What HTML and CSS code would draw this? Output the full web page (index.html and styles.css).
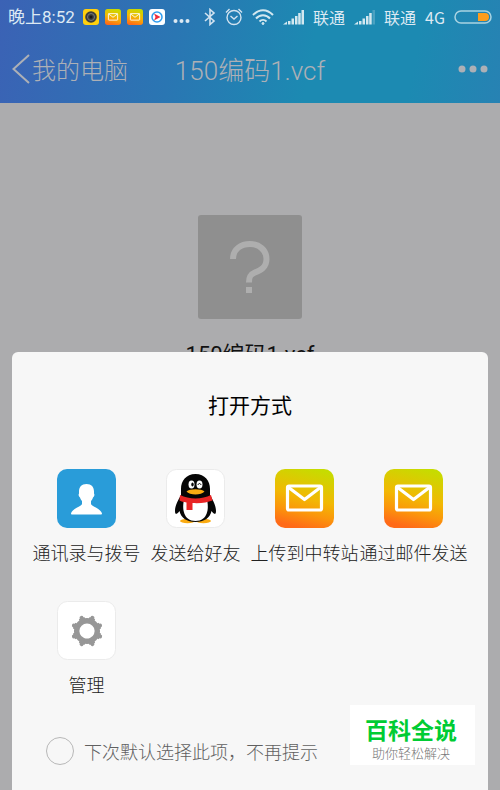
FILE: index.html
```html
<!DOCTYPE html>
<html lang="zh-CN">
<head>
    <meta charset="UTF-8">
    <meta name="viewport" content="width=device-width, initial-scale=1.0">
    <title>150编码1.vcf</title>
    <link rel="stylesheet" href="styles.css">
</head>
<body>
    <!-- shared icon shapes -->
    <svg class="defs" width="0" height="0">
        <defs>
            <linearGradient id="mailBg" x1="0.7" y1="0" x2="0.45" y2="1">
                <stop offset="0" stop-color="#c6dc00"/>
                <stop offset="0.5" stop-color="#f2b804"/>
                <stop offset="0.75" stop-color="#fb960b"/>
                <stop offset="1" stop-color="#ff6a18"/>
            </linearGradient>
            <symbol id="mail" viewBox="0 0 59 59">
                <rect width="59" height="59" rx="10" fill="url(#mailBg)"/>
                <rect x="12.5" y="17" width="34" height="24" rx="1.5" fill="none" stroke="#fff" stroke-width="3.2"/>
                <path d="M13 18l16.500 12.500L46 18" fill="none" stroke="#fff" stroke-width="3.2" stroke-linejoin="round"/>
            </symbol>
        </defs>
    </svg>

    <div class="top">
        <div class="status">
            <span class="time">晚上8:52</span>
            <div class="notices">
                <svg width="16" height="16" viewBox="0 0 16 16">
                    <rect width="16" height="16" rx="3" fill="#ffd00d"/>
                    <circle cx="8" cy="8" r="5.800" fill="#3b3d3c"/>
                    <circle cx="8" cy="8" r="3.500" fill="none" stroke="#777"/>
                    <circle cx="8" cy="8" r="1.500" fill="#181818"/>
                </svg>
                <svg width="16" height="16"><use href="#mail"/></svg>
                <svg width="16" height="16"><use href="#mail"/></svg>
                <svg width="16" height="16" viewBox="0 0 16 16">
                    <rect width="16" height="16" rx="3" fill="#fff"/>
                    <circle cx="8" cy="8" r="5" fill="none" stroke="#2f9df0" stroke-width="1.500"/>
                    <path d="M5 4.500l6.500 3.500L5 11.500 6.500 8z" fill="#f02c3c"/>
                </svg>
            </div>
            <svg width="17" height="16" viewBox="0 0 17 16" fill="#dde9f3">
                <circle cx="2.500" cy="12" r="2"/><circle cx="8.500" cy="12" r="2"/><circle cx="14.500" cy="12" r="2"/>
            </svg>
            <div class="signals">
                <svg width="12" height="18" viewBox="0 0 12 18" fill="none" stroke="#d3e3f0" stroke-width="1.600">
                    <path d="M1 5l9 8-4 3.500V1.500L10 5l-9 8"/>
                </svg>
                <svg width="18" height="18" viewBox="0 0 18 18" fill="none" stroke="#d3e3f0" stroke-width="1.400">
                    <circle cx="9" cy="9.500" r="7"/>
                    <path d="M5.500 8L9 11l3.500-3M1 4.500L4.500 1M17 4.500L13.500 1"/>
                </svg>
                <svg width="22" height="18" viewBox="0 0 22 18" fill="none" stroke="#d3e8f0" stroke-width="2">
                    <path d="M1 7c6-6.500 14-6.500 20 0M4 10.500c4-4.500 10-4.500 14 0M7.500 13.500c2-2 5-2 7 0"/>
                    <circle cx="11" cy="15.500" r="1" fill="#d3e8f0" stroke-width="1"/>
                </svg>
                <svg width="21" height="16" viewBox="0 0 21 16" fill="#d3e8f0">
                    <path d="M0 15.500l4-3v3zM5 12h2.500v3.500H5zM8.500 9.500H11v6H8.500zM12 7h2.500v8.500H12zM15.200 4h2.500v11.500h-2.500zM18.500 1H21v14.500h-2.500z"/>
                </svg>
                <span>联通</span>
                <svg width="21" height="16" viewBox="0 0 21 16" fill="#d3e8f0">
                    <path d="M0 15.500l4-3v3zM5 12h2.500v3.500H5zM8.500 9.500H11v6H8.500zM12 7h2.500v8.500H12zM15.200 4h2.500v11.500h-2.500z"/>
                    <path d="M18.500 1H21v14.500h-2.500z" opacity="0.25"/>
                </svg>
                <span>联通</span>
                <span>4G</span>
                <svg width="38" height="14" viewBox="0 0 38 14">
                    <rect x="1" y="1" width="36" height="12" rx="6" fill="none" stroke="#a9d3e2" stroke-width="1.500"/>
                    <path d="M24 3h7a4 4 0 0 1 0 8h-7z" fill="#ff9d1c"/>
                </svg>
            </div>
        </div>
        <div class="nav">
            <a class="back" href="#">
                <svg width="18" height="30" viewBox="0 0 18 30" fill="none" stroke="#adb0b6" stroke-width="2">
                    <path d="M17 1L1.500 15 17 29"/>
                </svg>
                我的电脑
            </a>
            <h1>150编码1.vcf</h1>
            <button class="more" type="button" aria-label="更多">
                <svg width="30" height="8" viewBox="0 0 30 8" fill="#adb0b6">
                    <circle cx="4" cy="4" r="3.500"/><circle cx="15" cy="4" r="3.500"/><circle cx="26" cy="4" r="3.500"/>
                </svg>
            </button>
        </div>
    </div>

    <div class="file">
        <div class="file-icon">
            <svg width="40" height="52" viewBox="0 0 40 52" fill="none" stroke="#aeaeae" stroke-width="6">
                <path d="M3 18C3 8 11 3 20 3s16.500 6 16.500 15S30 29.500 24 32c-4 1.700-5 4-5 9.500"/>
                <path d="M19 46v6"/>
            </svg>
        </div>
        <p class="file-name">150编码1.vcf</p>
    </div>

    <div class="sheet">
        <h2>打开方式</h2>
        <div class="apps">
            <button class="app" type="button">
                <svg width="59" height="59" viewBox="0 0 59 59">
                    <rect width="59" height="59" rx="10" fill="#299cd9"/>
                    <path d="M29.500 15c-5 0-7.500 3-7.500 7.500v2c-1 1 0 3.500 1 4 .5 2 1.500 3 2 3.500v3c0 2-10.500 5-11 9.500 0 .6.500 1 1 1h29c.5 0 1-.4 1-1-.5-4.500-11-7.500-11-9.500v-3c.5-.5 1.500-1.500 2-3.500 1-.5 2-3 1-4v-2c0-4.500-2.500-7.500-7.500-7.500z" fill="#fff"/>
                </svg>
                <span>通讯录与拨号</span>
            </button>
            <button class="app" type="button">
                <svg width="59" height="59" viewBox="0 0 59 59">
                    <rect x="0.500" y="0.500" width="58" height="58" rx="10" fill="#fff" stroke="#ebebeb"/>
                    <ellipse cx="21.500" cy="52" rx="7.500" ry="2.200" fill="#faab12"/>
                    <ellipse cx="37.500" cy="52" rx="7.500" ry="2.200" fill="#faab12"/>
                    <path d="M29.500 5C20 5 15 12 15 20v6c-3 5-6 11-6 16 0 4 2 3.500 4.500 0C15 49 21 53 29.500 53S44 49 45.500 42c2.500 3.500 4.500 4 4.500 0 0-5-3-11-6-16v-6C44 12 39 5 29.500 5z" fill="#060606"/>
                    <path d="M18 31h23c2 8 1 21-11.500 21S16 39 18 31z" fill="#fff"/>
                    <path d="M14 26c9 4.500 22 4.500 31 0l1.500 5.500c-5 2-12 3-20 2.500V41h-6v-7.500c-3-.5-5-1-7-2z" fill="#e82424"/>
                    <ellipse cx="25.500" cy="15.500" rx="3" ry="4" fill="#fff"/>
                    <ellipse cx="33.500" cy="15.500" rx="3" ry="4" fill="#fff"/>
                    <ellipse cx="26.500" cy="15.500" rx="1.200" ry="2" fill="#060606"/>
                    <path d="M32 16c.5-2 2.500-2 3 0" fill="none" stroke="#060606"/>
                    <path d="M20.500 22.500c3-3 15-3 18 0-3 4-15 4-18 0z" fill="#faab12"/>
                </svg>
                <span>发送给好友</span>
            </button>
            <button class="app" type="button">
                <svg width="59" height="59"><use href="#mail"/></svg>
                <span>上传到中转站</span>
            </button>
            <button class="app" type="button">
                <svg width="59" height="59"><use href="#mail"/></svg>
                <span>通过邮件发送</span>
            </button>
            <button class="app" type="button">
                <svg width="59" height="59" viewBox="0 0 59 59">
                    <rect x="0.500" y="0.500" width="58" height="58" rx="10" fill="#fff" stroke="#ebebeb"/>
                    <g transform="translate(30 30) rotate(22.500)" stroke="#979797" fill="none">
                        <circle r="10.300" stroke-width="5.400"/>
                        <path d="M0-11v-3.200M0 11v3.200M-11 0h-3.200M11 0h3.200M-7.800-7.800l-2.200-2.200M7.800 7.800l2.200 2.200M-7.800 7.800l-2.200 2.200M7.800-7.800l2.200-2.200" stroke-width="4" stroke-linecap="round"/>
                        <path d="M0-10v-4M0 10v4M-10 0h-4M10 0h4M-7-7l-2.900-2.900M7 7l2.900 2.900M-7 7l-2.900 2.900M7-7l2.900-2.900" stroke-width="6"/>
                    </g>
                </svg>
                <span>管理</span>
            </button>
        </div>
        <label class="remember" for="remember">
            <input type="checkbox" id="remember">
            下次默认选择此项，不再提示
        </label>
    </div>

    <div class="badge">
        <strong>百科全说</strong>
        <span>助你轻松解决</span>
    </div>
</body>
</html>
```

FILE: styles.css
```css
* {
    box-sizing: border-box;
}

body {
    margin: 0;
    min-height: 100vh;
    overflow: hidden;
    font-family: "Noto Sans CJK SC", sans-serif;
    font-weight: 300;
    background: #acacae;
}

h1, h2, p {
    margin: 0;
    font-weight: 300;
}

svg {
    display: block;
    flex-shrink: 0;
}

button {
    padding: 0;
    border: none;
    background: none;
    font: inherit;
    cursor: pointer;
}

.defs {
    position: absolute;
}

.top {
    background: linear-gradient(100deg, #3b62b5 0%, #2a76b3 35%, #1c8ab2 62%, #1c8ab2 82%, #2782b3 100%);
}

.time,
.nav h1,
.file-name {
    font-family: Roboto, "Noto Sans CJK SC", sans-serif;
}

.status {
    display: flex;
    align-items: center;
    height: 34px;
    padding: 0 8px;
    font-size: 16px;
    font-weight: 400;
    line-height: 34px;
    white-space: nowrap;
    color: #dde9f3;
}

.time {
    font-size: 17px;
}

.notices {
    display: flex;
    gap: 6px;
    margin: 0 8px;
}

.signals {
    display: flex;
    align-items: center;
    gap: 9px;
    margin-left: auto;
}

.nav {
    display: grid;
    grid-template-columns: 1fr auto 1fr;
    align-items: center;
    height: 69px;
    padding: 0 12px;
    color: #adb0b6;
}

.back {
    display: flex;
    align-items: center;
    gap: 2px;
    font-size: 24px;
    white-space: nowrap;
    color: #adb0b6;
    text-decoration: none;
}

.nav h1 {
    padding-top: 4px;
    font-size: 26px;
    line-height: 40px;
}

.more {
    justify-self: end;
}

.file {
    display: flex;
    flex-direction: column;
    align-items: center;
    padding-top: 112px;
}

.file-icon {
    display: flex;
    justify-content: center;
    align-items: center;
    width: 104px;
    height: 104px;
    border-radius: 3px;
    background: #8f8f8f;
}

.file-name {
    margin-top: 20px;
    font-size: 22px;
    font-weight: 400;
    line-height: 32px;
    color: #111;
}

.sheet {
    position: fixed;
    left: 12px;
    right: 12px;
    bottom: 0;
    padding: 36px 20px 25px;
    border-radius: 6px 6px 0 0;
    background: #f7f7f7;
}

.sheet h2 {
    font-size: 21px;
    font-weight: 400;
    line-height: 32px;
    text-align: center;
    color: #000;
}

.apps {
    display: grid;
    grid-template-columns: repeat(4, 1fr);
    row-gap: 35px;
    margin-top: 49px;
}

.app {
    display: flex;
    flex-direction: column;
    align-items: center;
    gap: 10px;
    font-size: 18px;
    line-height: 28px;
    white-space: nowrap;
    color: #222;
}

.remember {
    display: flex;
    align-items: center;
    gap: 10px;
    margin: 39px 0 0 14px;
    font-size: 18px;
    line-height: 28px;
    color: #606060;
}

.remember input {
    appearance: none;
    width: 28px;
    height: 28px;
    margin: 0;
    border: 1px solid #b8b8b8;
    border-radius: 50%;
}

.remember input:checked {
    background: #299cd9;
}

.badge {
    position: fixed;
    right: 25px;
    bottom: 25px;
    display: flex;
    flex-direction: column;
    align-items: center;
    width: 125px;
    padding: 7px 3px 5px 0;
    background: #fff;
    font-size: 13px;
    line-height: 14px;
    color: #777;
}

.badge strong {
    font-size: 23px;
    font-weight: 700;
    line-height: 34px;
    color: #00cc33;
}
```
